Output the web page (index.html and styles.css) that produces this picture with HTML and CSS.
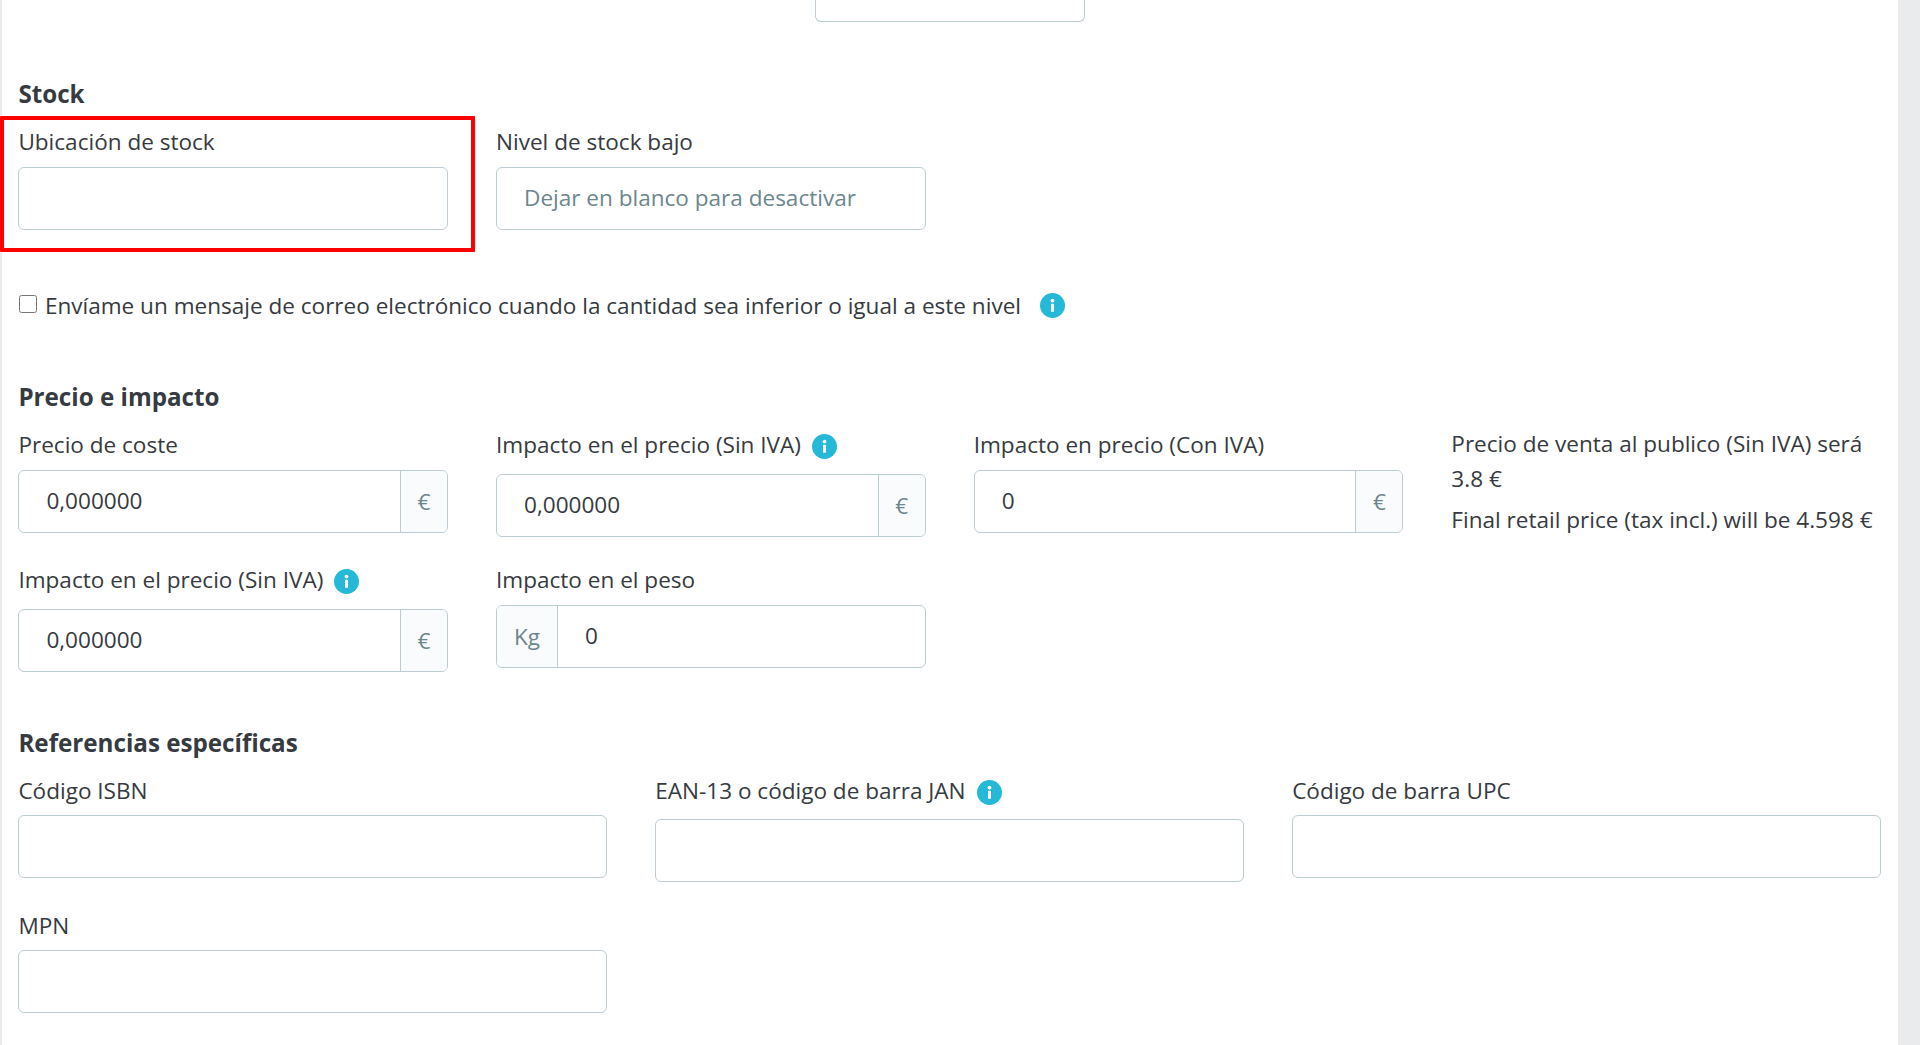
FILE: index.html
```html
<!DOCTYPE html>
<html lang="es">
<head>
<meta charset="utf-8">
<title>Stock</title>
<link rel="stylesheet" href="styles.css">
</head>
<body>
<main class="panel">
  <div class="stub-row"><div class="stub"></div></div>

  <section class="stock">
    <h2 class="heading">Stock</h2>
    <div class="grid grid-4">
      <div class="field field-marked">
        <label class="label">Ubicación de stock</label>
        <input class="input" type="text">
        <span class="marker"></span>
      </div>
      <div class="field">
        <label class="label">Nivel de stock bajo</label>
        <input class="input" type="text" placeholder="Dejar en blanco para desactivar">
      </div>
    </div>
    <div class="check-row">
      <input class="check" type="checkbox">
      <span>Envíame un mensaje de correo electrónico cuando la cantidad sea inferior o igual a este nivel</span>
      <svg class="info info-wide" viewBox="0 0 25 25"><circle cx="12.5" cy="12.5" r="12.5"/><circle class="info-mark" cx="12.5" cy="7.6" r="1.9"/><rect class="info-mark" x="11" y="10.8" width="3" height="8" rx="0.6"/></svg>
    </div>
  </section>

  <section class="price">
    <h2 class="heading">Precio e impacto</h2>
    <div class="grid grid-4">
      <div class="field">
        <label class="label">Precio de coste</label>
        <div class="group"><input class="group-input" type="text" value="0,000000"><span class="addon addon-end">€</span></div>
      </div>
      <div class="field">
        <label class="label label-info">Impacto en el precio (Sin IVA)
          <svg class="info" viewBox="0 0 25 25"><circle cx="12.5" cy="12.5" r="12.5"/><circle class="info-mark" cx="12.5" cy="7.6" r="1.9"/><rect class="info-mark" x="11" y="10.8" width="3" height="8" rx="0.6"/></svg>
        </label>
        <div class="group"><input class="group-input" type="text" value="0,000000"><span class="addon addon-end">€</span></div>
      </div>
      <div class="field">
        <label class="label">Impacto en precio (Con IVA)</label>
        <div class="group"><input class="group-input" type="text" value="0"><span class="addon addon-end">€</span></div>
      </div>
      <div class="summary">
        <p class="summary-line">Precio de venta al publico (Sin IVA) será 3.8 €</p>
        <p class="summary-line">Final retail price (tax incl.) will be 4.598 €</p>
      </div>
      <div class="field">
        <label class="label label-info">Impacto en el precio (Sin IVA)
          <svg class="info" viewBox="0 0 25 25"><circle cx="12.5" cy="12.5" r="12.5"/><circle class="info-mark" cx="12.5" cy="7.6" r="1.9"/><rect class="info-mark" x="11" y="10.8" width="3" height="8" rx="0.6"/></svg>
        </label>
        <div class="group"><input class="group-input" type="text" value="0,000000"><span class="addon addon-end">€</span></div>
      </div>
      <div class="field">
        <label class="label">Impacto en el peso</label>
        <div class="group"><span class="addon addon-start">Kg</span><input class="group-input" type="text" value="0"></div>
      </div>
    </div>
  </section>

  <section class="refs">
    <h2 class="heading">Referencias específicas</h2>
    <div class="grid grid-3">
      <div class="field">
        <label class="label">Código ISBN</label>
        <input class="input" type="text">
      </div>
      <div class="field">
        <label class="label label-info">EAN-13 o código de barra JAN
          <svg class="info" viewBox="0 0 25 25"><circle cx="12.5" cy="12.5" r="12.5"/><circle class="info-mark" cx="12.5" cy="7.6" r="1.9"/><rect class="info-mark" x="11" y="10.8" width="3" height="8" rx="0.6"/></svg>
        </label>
        <input class="input" type="text">
      </div>
      <div class="field">
        <label class="label">Código de barra UPC</label>
        <input class="input" type="text">
      </div>
      <div class="field">
        <label class="label">MPN</label>
        <input class="input" type="text">
      </div>
    </div>
  </section>
</main>
</body>
</html>
```
FILE: styles.css
```css
* { box-sizing: border-box; }

html, body { margin: 0; height: 100%; }

body {
  background: #eaebec;
  color: #363a41;
  font-family: "Open Sans", "Liberation Sans", sans-serif;
  font-size: 22.56px;
  overflow: hidden;
}

.panel {
  margin: 0 22px 0 2px;
  height: 1045px;
  background: #fff;
  padding: 0 17px 0 16.4px;
}

.stub-row { display: flex; justify-content: center; height: 22px; }

.stub {
  width: 270px;
  height: 22px;
  border: 1.5px solid #bbcdd2;
  border-top: 0;
  border-radius: 0 0 6px 6px;
}

.stock { padding-top: 56px; }
.price { padding-top: 59.5px; }
.refs { padding-top: 55px; }

.heading {
  margin: 0 0 16px;
  font-size: 24.2px;
  line-height: 32px;
  font-weight: 700;
}

.grid { display: grid; column-gap: 48px; row-gap: 27.5px; align-items: start; }
.grid-4 { grid-template-columns: repeat(4, 1fr); }
.grid-3 { grid-template-columns: repeat(3, 1fr); }

.field { position: relative; }

.label { display: block; height: 32px; line-height: 32px; margin-bottom: 8.5px; }

.label-info { display: flex; align-items: flex-start; gap: 11px; height: 36px; white-space: nowrap; }

.info { width: 25px; height: 25px; flex: none; margin-top: 5px; fill: #25b9d7; }
.info-mark { fill: #fff; }
.info-wide { margin: 0 0 0 11px; }

.input, .group {
  display: flex;
  width: 100%;
  height: 63px;
  border: 1.5px solid #bbcdd2;
  border-radius: 6px;
  background: #fff;
  overflow: hidden;
}

.input, .group-input {
  font: inherit;
  color: #363a41;
  padding: 0 27px 1px;
  outline: 0;
}

.input::placeholder { color: #6c868e; opacity: 1; }

.group-input { flex: 1; min-width: 0; border: 0; background: transparent; height: 100%; }

.addon {
  display: flex;
  align-items: center;
  justify-content: center;
  flex: none;
  background: #fafbfc;
  color: #6c868e;
}

.addon-end { width: 47px; border-left: 1.5px solid #bbcdd2; }
.addon-start { width: 61px; border-right: 1.5px solid #bbcdd2; }

.summary { line-height: 35px; margin: -3px 0 -20px; }
.summary-line { margin: 0 0 6px; }

.check-row {
  display: flex;
  align-items: center;
  height: 32px;
  margin-top: 60px;
  gap: 8px;
}

.check { width: 18px; height: 18px; margin: -3px 0 0 0.5px; flex: none; }

.marker {
  position: absolute;
  left: -18.4px;
  top: -10px;
  width: 475px;
  height: 136px;
  border: 4px solid #f00;
  border-radius: 1px;
  pointer-events: none;
}
```
